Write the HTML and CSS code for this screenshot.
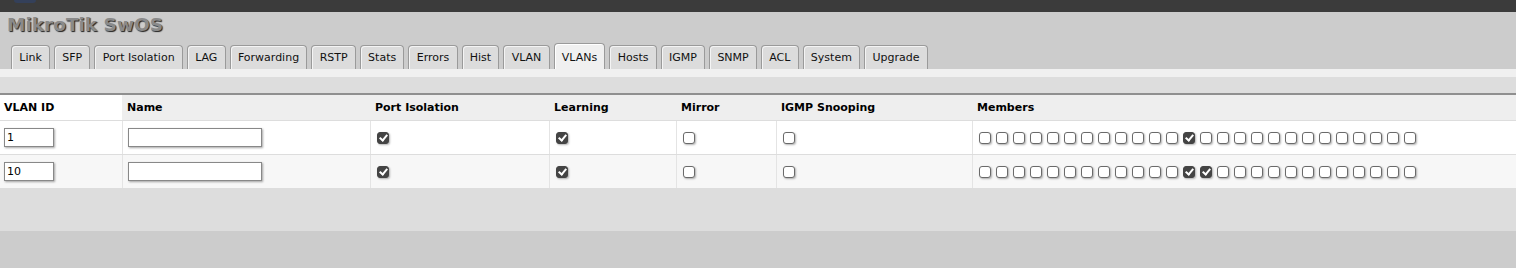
FILE: index.html
```html
<!DOCTYPE html>
<html lang="en">
<head>
  <meta charset="UTF-8" />
  <title>MikroTik SwOS</title>
  <link rel="stylesheet" href="styles.css">
</head>
<body>

  <div class="topbar"><div class="topbar-mark"></div></div>

  <div class="header">
    <div class="logo">MikroTik SwOS</div>
    <div class="tabs">
      <a class="tab">Link</a>
      <a class="tab">SFP</a>
      <a class="tab">Port Isolation</a>
      <a class="tab">LAG</a>
      <a class="tab">Forwarding</a>
      <a class="tab">RSTP</a>
      <a class="tab">Stats</a>
      <a class="tab">Errors</a>
      <a class="tab">Hist</a>
      <a class="tab">VLAN</a>
      <a class="tab active">VLANs</a>
      <a class="tab">Hosts</a>
      <a class="tab">IGMP</a>
      <a class="tab">SNMP</a>
      <a class="tab">ACL</a>
      <a class="tab">System</a>
      <a class="tab">Upgrade</a>
    </div>
  </div>
  <div class="tabstrip"></div>

  <div class="content">
    <table class="vlans">
      <colgroup>
        <col style="width:122px">
        <col style="width:248px">
        <col style="width:179px">
        <col style="width:127px">
        <col style="width:100px">
        <col style="width:196px">
        <col>
      </colgroup>
      <thead>
        <tr>
          <th class="first">VLAN ID</th>
          <th>Name</th>
          <th>Port Isolation</th>
          <th>Learning</th>
          <th>Mirror</th>
          <th>IGMP Snooping</th>
          <th>Members</th>
        </tr>
      </thead>
      <tbody id="rows"></tbody>
    </table>
  </div>

  <script>
  const vlans = [
    { id: '1', isolation: true, learning: true, mirror: false, igmp: false, members: [12] },
    { id: '10', isolation: true, learning: true, mirror: false, igmp: false, members: [12, 13] }
  ];

  function box(checked) {
    return '<input type="checkbox" class="cb"' + (checked ? ' checked' : '') + '>';
  }

  const tbody = document.getElementById('rows');
  vlans.forEach(v => {
    let members = '';
    for (let i = 0; i < 26; i++) {
      members += box(v.members.includes(i));
    }
    const tr = document.createElement('tr');
    tr.innerHTML = `
      <td class="first"><input type="text" class="vid" value="${v.id}"></td>
      <td><input type="text" class="name" value=""></td>
      <td>${box(v.isolation)}</td>
      <td>${box(v.learning)}</td>
      <td>${box(v.mirror)}</td>
      <td>${box(v.igmp)}</td>
      <td class="members">${members}</td>
    `;
    tbody.appendChild(tr);
  });
  </script>

</body>
</html>
```

FILE: styles.css
```css
body {
  margin: 0;
  background: #ccc;
  font-family: "DejaVu Sans", Verdana, sans-serif;
  font-size: 11px;
  color: #000;
}
.topbar {
  height: 12px;
  background: #3b3b3b;
}
.topbar-mark {
  margin-left: 14px;
  width: 22px;
  height: 3px;
  background: #34405a;
  border-radius: 0 0 3px 3px;
}
.header {
  background: #ccc;
}
.logo {
  height: 28px;
  padding: 3px 0 0 7px;
  line-height: 20px;
  font-size: 18.5px;
  font-weight: bold;
  color: #8a8a8a;
  text-shadow: 1px 1px 1px #222;
}
.tabs {
  display: flex;
  align-items: flex-end;
  gap: 4px;
  padding-left: 11px;
}
.tab {
  display: block;
  padding: 0 7.25px;
  line-height: 23px;
  background: #dcdcdc;
  border: 1px solid #9a9a9a;
  border-bottom: none;
  border-radius: 4px 4px 0 0;
  box-shadow: inset 1px 1px 0 #f4f4f4;
  color: #111;
  cursor: pointer;
}
.tab.active {
  padding-top: 2px;
  background: #f0f0f0;
  box-shadow: inset 1px 1px 0 #fff;
}
.tabstrip {
  height: 8px;
  background: #f0f0f0;
}
.content {
  background: #ddd;
  padding: 16px 0 42px;
}
.vlans {
  width: 100%;
  table-layout: fixed;
  border-collapse: collapse;
  border-top: 2px solid #8f8f8f;
}
.vlans th {
  height: 25px;
  padding: 0 5px;
  background: #eee;
  text-align: left;
  font-weight: bold;
  border-bottom: 1px solid #ddd;
  white-space: nowrap;
}
.vlans th.first {
  background: #fff;
  padding-left: 4px;
}
.vlans td {
  height: 33px;
  padding: 0 5px;
  border-left: 1px solid #e4e4e4;
  border-bottom: 1px solid #ddd;
  vertical-align: middle;
  white-space: nowrap;
}
.vlans td.first {
  border-left: none;
  padding-left: 4px;
}
.vlans tbody tr {
  background: #fff;
}
.vlans tbody tr:nth-child(2) {
  background: #f7f7f7;
}
.vlans input[type=text] {
  box-sizing: border-box;
  height: 19px;
  margin: 0;
  padding: 0 2px;
  border: 1px solid #888;
  background: #fff;
  box-shadow: 1px 1px 2px rgba(0, 0, 0, 0.35);
  font-family: "DejaVu Sans", Verdana, sans-serif;
  font-size: 11px;
  color: #000;
  vertical-align: middle;
}
.vid {
  width: 50px;
}
.name {
  width: 134px;
}
.cb {
  appearance: none;
  -webkit-appearance: none;
  position: relative;
  box-sizing: border-box;
  width: 12px;
  height: 12px;
  margin: 0 0 0 1px;
  border: 1px solid #6a6a6a;
  border-radius: 3px;
  background: #fff;
  box-shadow: 1px 1px 2px rgba(0, 0, 0, 0.3);
  vertical-align: middle;
}
.members .cb {
  margin: 0 4px 0 1px;
}
.cb:checked {
  background: #444;
  border-color: #444;
}
.cb:checked::after {
  content: '';
  position: absolute;
  left: 3px;
  top: 0px;
  width: 3px;
  height: 6px;
  border: solid #fff;
  border-width: 0 2px 2px 0;
  transform: rotate(40deg);
}
```
